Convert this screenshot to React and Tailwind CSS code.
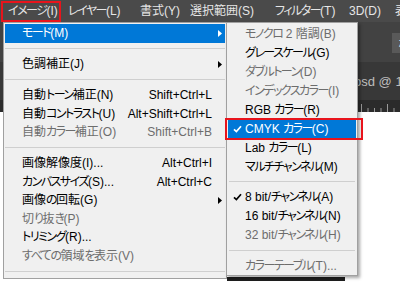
import React from "react";

const FONT =
  "[font-family:'Liberation_Sans','Noto_Sans_CJK_JP',sans-serif] [font-feature-settings:'palt']";

function J({ t }) {
  const parts = t.split(/([\u3040-\u30ff]+)/);
  return (
    <>
      {parts.map((p, i) =>
        /[\u3040-\u30ff]/.test(p) ? (
          <span key={i} className="tracking-[-1.5px]">
            {p}
          </span>
        ) : (
          <span key={i}>{p}</span>
        )
      )}
    </>
  );
}

const mainItems = [
  { t: "モード(M)", hl: true, arrow: true },
  { sep: true },
  { t: "色調補正(J)", arrow: true },
  { sep: true },
  { t: "自動トーン補正(N)", k: "Shift+Ctrl+L" },
  { t: "自動コントラスト(U)", k: "Alt+Shift+Ctrl+L" },
  { t: "自動カラー補正(O)", k: "Shift+Ctrl+B", dis: true },
  { sep: true },
  { t: "画像解像度(I)...", k: "Alt+Ctrl+I" },
  { t: "カンバスサイズ(S)...", k: "Alt+Ctrl+C" },
  { t: "画像の回転(G)", arrow: true },
  { t: "切り抜き(P)", dis: true },
  { t: "トリミング(R)..." },
  { t: "すべての領域を表示(V)", dis: true },
  { sep: true },
];

const subItems = [
  { t: "モノクロ 2 階調(B)", dis: true },
  { t: "グレースケール(G)" },
  { t: "ダブルトーン(D)", dis: true },
  { t: "インデックスカラー(I)", dis: true },
  { t: "RGB カラー(R)" },
  { t: "CMYK カラー(C)", hl: true, check: true },
  { t: "Lab カラー(L)" },
  { t: "マルチチャンネル(M)" },
  { sep: true },
  { t: "8 bit/チャンネル(A)", check: true },
  { t: "16 bit/チャンネル(N)" },
  { t: "32 bit/チャンネル(H)", dis: true },
  { sep: true },
  { t: "カラーテーブル(T)...", dis: true },
];

function Arrow({ white }) {
  return (
    <svg width="4" height="7" viewBox="0 0 4 7" className="block">
      <path d="M0 0 L4 3.5 L0 7 Z" fill={white ? "#ffffff" : "#000000"} />
    </svg>
  );
}

function Check({ white }) {
  return (
    <svg width="9" height="8" viewBox="0 0 9 8" className="block">
      <path
        d="M1 4.3 L3.4 6.6 L8 1.2"
        fill="none"
        stroke={white ? "#ffffff" : "#000000"}
        strokeWidth="1.7"
      />
    </svg>
  );
}

function MainRow({ item }) {
  if (item.sep) {
    return (
      <div className="h-[12.5px] flex items-center px-[1px]">
        <div className="h-px w-full bg-[#cfcfcf]" />
      </div>
    );
  }
  const color = item.hl ? "text-white" : item.dis ? "text-[#6d6d6d]" : "text-black";
  return (
    <div
      className={`h-[18.5px] mx-[1px] flex items-center ${item.hl ? "bg-[#0078d7]" : ""} ${color}`}
    >
      <span className="pl-[17px] flex-1 whitespace-nowrap">
        <J t={item.t} />
      </span>
      {item.k && <span className="whitespace-nowrap">{item.k}</span>}
      <span className="w-[13px] shrink-0 flex justify-start pl-[6px]">
        {item.arrow && <Arrow white={item.hl} />}
      </span>
    </div>
  );
}

function SubRow({ item }) {
  if (item.sep) {
    return (
      <div className="h-[11.5px] flex items-center px-[2px]">
        <div className="h-px w-full bg-[#cfcfcf]" />
      </div>
    );
  }
  const color = item.hl ? "text-white" : item.dis ? "text-[#6d6d6d]" : "text-black";
  return (
    <div
      className={`h-[19px] mx-[1px] flex items-center ${item.hl ? "bg-[#0078d7]" : ""} ${color}`}
    >
      <span className="w-[17px] shrink-0 pl-[5px] flex items-center">
        {item.check && <Check white={item.hl} />}
      </span>
      <span className="whitespace-nowrap">
        <J t={item.t} />
      </span>
    </div>
  );
}

function Ruler() {
  const ticks = [];
  for (let i = 0; i < 8; i++) ticks.push(i);
  return (
    <svg width="400" height="12" className="block">
      {ticks.map((i) => (
        <line
          key={i}
          x1={364 + i * 6.5 + 0.5}
          x2={364 + i * 6.5 + 0.5}
          y1={i % 4 === 0 ? 4 : 8}
          y2={12}
          stroke="#9a9a9a"
          strokeWidth="1"
        />
      ))}
    </svg>
  );
}

const topItems = [
  ["イメージ(I)", "w-[60px]"],
  ["レイヤー(L)", "w-[72px]"],
  ["書式(Y)", "w-[50px]"],
  ["選択範囲(S)", "w-[85px]"],
  ["フィルター(T)", "w-[74px]"],
  ["3D(D)", "w-[46px]"],
  ["表示(V)", "w-[50px]"],
];

export default function App() {
  return (
    <div className={`relative w-[400px] h-[290px] overflow-hidden bg-white text-[12px] leading-none ${FONT}`}>
      {/* Menu bar */}
      <div className="h-[22px] bg-[#4a4a4a] flex items-center pl-[8px] text-[#e6e6e6] whitespace-nowrap">
        {topItems.map(([t, w]) => (
          <span key={t} className={`${w} shrink-0`}>
            <J t={t} />
          </span>
        ))}
      </div>

      {/* Workspace behind the menus */}
      <div className="flex">
        <div className="w-[3px] h-[257px] bg-[#3a3a3a]" />
        <div className="flex-1 flex flex-col">
          <div className="h-[40px] bg-[#424242] flex items-center justify-end pt-[2px]">
            <div className="w-[37px] h-[20px] bg-[#595959] flex items-center pl-[7px] text-[#f0f0f0] text-[13px]">
              標準
            </div>
          </div>
          <div className="h-[38px] bg-[#383838] flex items-center pl-[354px] text-[#bdbdbd] text-[13px] whitespace-nowrap">
            psd @ 100%
          </div>
          <div className="h-[12px] bg-[#2b2b2b] -ml-[3px]">
            <Ruler />
          </div>
          <div className="flex-1 bg-white -ml-[3px] pt-[165px] pl-[230px]">
            <div className="w-[118px] h-[4px] bg-[#1e1e1e]" />
          </div>
        </div>
      </div>

      {/* Red box on menu bar item */}
      <div className="absolute left-[1px] top-[1px] w-[60px] h-[21px] border-2 border-[#e8141c]" />

      {/* Main dropdown */}
      <div className="absolute left-[3px] top-[22px] w-[224px] h-[257px] bg-[#f0f0f0] border border-[#a0a0a0] pt-[1px]">
        {mainItems.map((it, i) => (
          <MainRow key={i} item={it} />
        ))}
      </div>

      {/* Submenu */}
      <div className="absolute left-[226px] top-[22px] w-[132px] h-[254px] bg-[#f0f0f0] border border-[#a0a0a0] pt-[1px] shadow-[2px_2px_3px_rgba(0,0,0,0.35)]">
        {subItems.map((it, i) => (
          <SubRow key={i} item={it} />
        ))}
      </div>

      {/* Red highlight around CMYK */}
      <div className="absolute left-[225px] top-[118px] w-[138px] h-[22px] border-2 border-[#e8141c]" />
    </div>
  );
}
